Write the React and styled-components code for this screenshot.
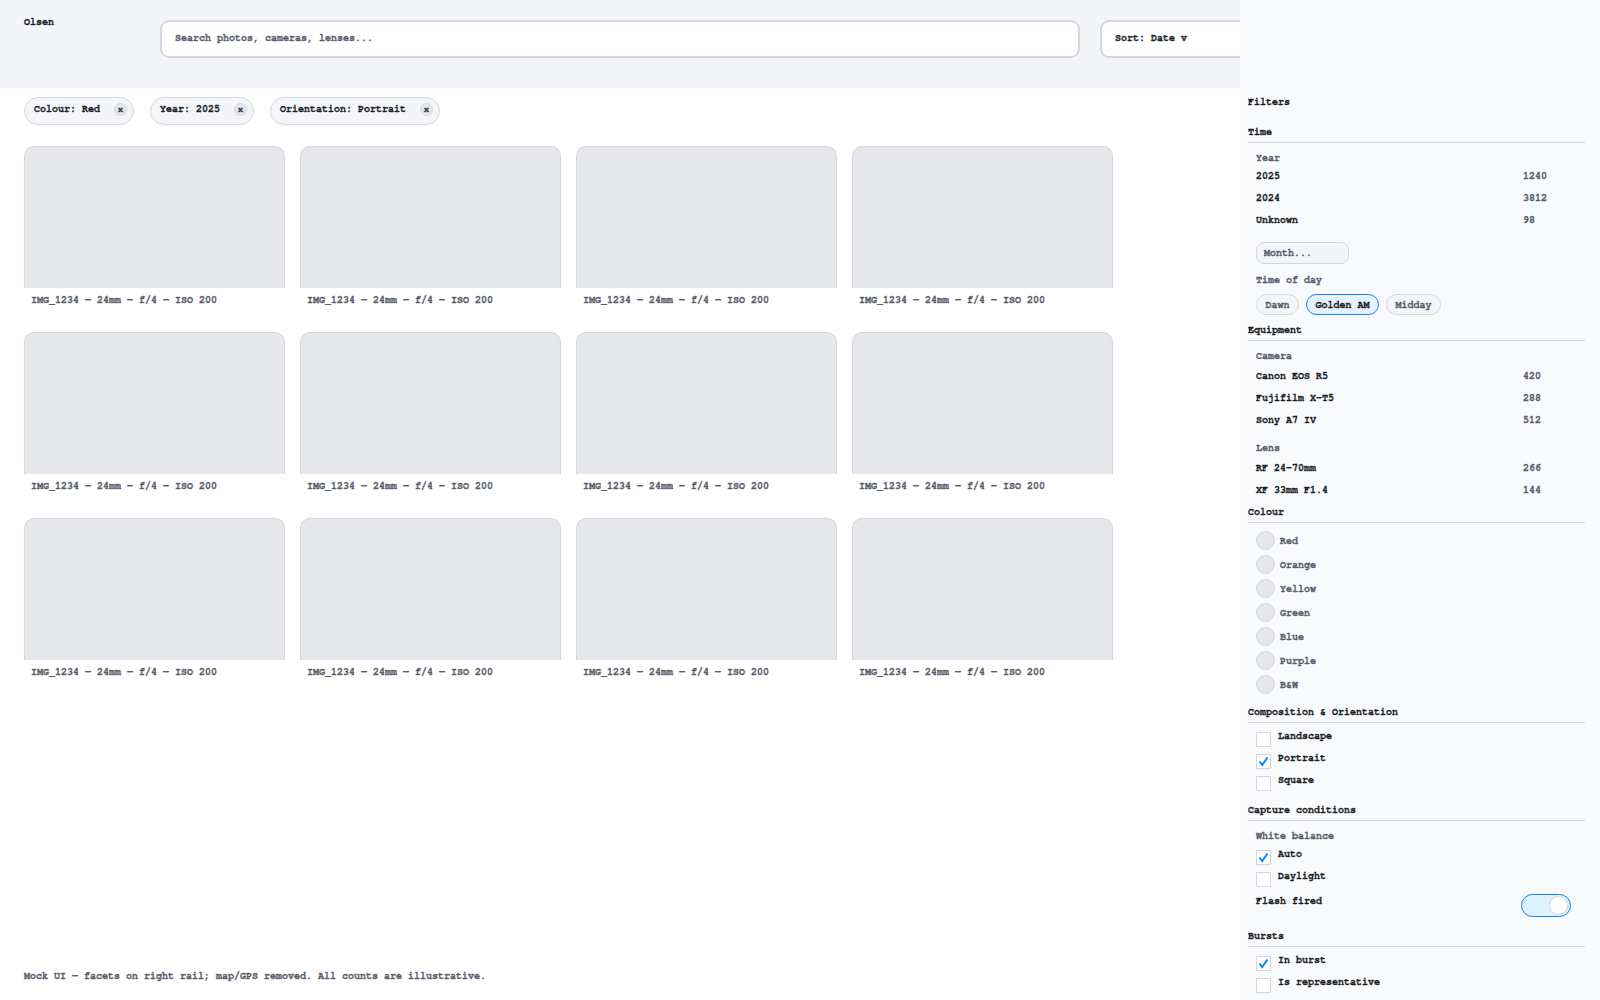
import React from 'react';
import styled, { createGlobalStyle } from 'styled-components';

const Global = createGlobalStyle`
  html, body { margin: 0; padding: 0; }
  body {
    font-family: FreeMono, "Liberation Mono", monospace;
    font-size: 10px;
    color: #1b1e26;
    background: #ffffff;
    -webkit-text-stroke: 0.3px currentColor;
  }
  * { box-sizing: border-box; }
`;

const C = {
  ink: '#1b1e26',
  muted: '#585d6b',
  line: '#d4d6dd',
  headerBg: '#f4f5f9',
  railBg: '#f9fafc',
  thumb: '#e5e7eb',
  blue: '#0a84ff',
};

/* ---------- main column ---------- */
const Main = styled.main`
  min-height: 100vh;
  display: flex;
  flex-direction: column;
`;

const Header = styled.header`
  height: 88px;
  background: ${C.headerBg};
  display: grid;
  grid-template-columns: 116px 1fr 476px;
  column-gap: 20px;
  align-items: start;
  padding: 20px 24px 0;
`;

const Logo = styled.div`
  font-weight: 700;
  line-height: 14px;
  margin-top: -5px;
`;

const Field = styled.div`
  height: 38px;
  border: 2px solid ${C.line};
  border-radius: 9px;
  background: #fff;
  display: flex;
  align-items: center;
  padding: 0 13px 2px;
  font-weight: 700;
  color: ${(p) => (p.$placeholder ? C.muted : C.ink)};
  white-space: nowrap;
`;

const ChipBar = styled.div`
  display: flex;
  gap: 16px;
  padding: 9px 24px 0;
`;

const Chip = styled.div`
  height: 28px;
  display: inline-flex;
  align-items: center;
  gap: 14px;
  padding: 0 6px 4px 9px;
  border: 1px solid ${C.line};
  border-radius: 14px;
  background: ${C.headerBg};
  font-weight: 700;
  white-space: nowrap;
`;

const ChipX = styled.span`
  width: 13px;
  height: 13px;
  border-radius: 50%;
  background: ${C.thumb};
  border: 1px solid ${C.line};
  display: grid;
  place-items: center;
  font-size: 9px;
  line-height: 1;
  font-weight: 700;
  color: #3a3e49;
`;

const Grid = styled.section`
  display: grid;
  grid-template-columns: repeat(4, 261px);
  column-gap: 15px;
  row-gap: 16px;
  margin-top: 21px;
  padding: 0 24px;
`;

const Card = styled.article`
  display: flex;
  flex-direction: column;
`;

const Thumb = styled.div`
  height: 142px;
  background: ${C.thumb};
  border: 1px solid ${C.line};
  border-bottom: none;
  border-radius: 10px 10px 0 0;
`;

const Caption = styled.div`
  padding: 5px 7px 9px;
  line-height: 14px;
  font-weight: 700;
  color: ${C.muted};
  white-space: nowrap;
`;

const Footer = styled.footer`
  margin-top: auto;
  padding: 0 24px 17px;
  line-height: 14px;
  font-weight: 700;
  color: ${C.muted};
`;

/* ---------- right rail ---------- */
const Rail = styled.aside`
  position: fixed;
  top: 0;
  right: 0;
  width: 360px;
  height: 100vh;
  overflow: hidden;
  background: ${C.railBg};
  padding: 95px 15px 0 8px;
`;

const RailTitle = styled.div`
  font-weight: 700;
  line-height: 14px;
  margin-bottom: 16px;
`;

const SectionHead = styled.div`
  font-weight: 700;
  line-height: 14px;
  padding-bottom: 3px;
  border-bottom: 1px solid #d5d6df;
`;

const SectionBody = styled.div`
  display: flex;
  flex-direction: column;
  padding: ${(p) => p.$top}px 14px ${(p) => p.$bottom}px 8px;
`;

const GroupLabel = styled.div`
  line-height: 14px;
  font-weight: 700;
  color: ${C.muted};
  margin-top: ${(p) => p.$mt || 0}px;
`;

const FacetList = styled.div`
  display: flex;
  flex-direction: column;
  margin-top: ${(p) => p.$mt || 0}px;
`;

const FacetRow = styled.div`
  height: 22px;
  display: grid;
  grid-template-columns: 1fr 48px;
  align-items: center;
  font-weight: 700;
`;

const Count = styled.span`
  color: ${C.muted};
`;

const Select = styled.div`
  width: 93px;
  height: 22px;
  margin-top: 11px;
  border: 1px solid ${C.line};
  border-radius: 8px;
  background: ${C.headerBg};
  display: flex;
  align-items: center;
  padding: 0 7px;
  font-weight: 700;
  color: ${C.muted};
`;

const PillRow = styled.div`
  display: flex;
  gap: 7px;
  margin-top: 7px;
`;

const Pill = styled.div`
  height: 21px;
  display: flex;
  align-items: center;
  padding: 0 8.5px;
  border: 1px solid ${(p) => (p.$on ? C.blue : C.line)};
  border-radius: 11px;
  background: ${(p) => (p.$on ? '#e6f3ff' : C.headerBg)};
  color: ${(p) => (p.$on ? C.ink : C.muted)};
  font-weight: 700;
`;

const SwatchList = styled.div`
  display: flex;
  flex-direction: column;
  gap: 5px;
`;

const SwatchRow = styled.div`
  height: 19px;
  display: flex;
  align-items: center;
  gap: 5px;
  font-weight: 700;
  color: ${C.muted};
`;

const Swatch = styled.span`
  width: 19px;
  height: 19px;
  border-radius: 50%;
  background: ${C.thumb};
  border: 1px solid ${C.line};
`;

const CheckRow = styled.div`
  height: 22px;
  display: flex;
  align-items: flex-start;
  gap: 7px;
  font-weight: 700;
  line-height: 14px;
  margin-top: ${(p) => p.$mt || 0}px;
`;

const Box = styled.span`
  width: 15px;
  height: 15px;
  margin-top: 3px;
  background: #fff;
  border: 1px solid ${C.line};
  display: grid;
  place-items: center;
`;

const ToggleRow = styled.div`
  display: flex;
  justify-content: space-between;
  align-items: flex-start;
  margin-top: 3px;
  font-weight: 700;
  line-height: 14px;
`;

const Toggle = styled.span`
  width: 50px;
  height: 23px;
  border: 1px solid ${C.blue};
  border-radius: 12px;
  background: #dff2ff;
  display: flex;
  align-items: center;
  justify-content: flex-end;
  padding-right: 2px;
`;

const Knob = styled.span`
  width: 19px;
  height: 19px;
  border-radius: 50%;
  background: #fff;
  border: 1px solid ${C.line};
`;

const Check = () => (
  <svg width="11" height="11" viewBox="0 0 11 11">
    <path d="M1.5 5.5 L4.2 9 L9.5 1.5" fill="none" stroke={C.blue} strokeWidth="2" />
  </svg>
);

const CheckItem = ({ on, children, mt }) => (
  <CheckRow $mt={mt}>
    <Box>{on && <Check />}</Box>
    <span>{children}</span>
  </CheckRow>
);

const Facets = ({ items, mt }) => (
  <FacetList $mt={mt}>
    {items.map(([l, n]) => (
      <FacetRow key={l}>
        <span>{l}</span>
        <Count>{n}</Count>
      </FacetRow>
    ))}
  </FacetList>
);

const chips = ['Colour: Red', 'Year: 2025', 'Orientation: Portrait'];
const years = [['2025', 1240], ['2024', 3812], ['Unknown', 98]];
const cameras = [['Canon EOS R5', 420], ['Fujifilm X-T5', 288], ['Sony A7 IV', 512]];
const lenses = [['RF 24-70mm', 266], ['XF 33mm F1.4', 144]];
const colours = ['Red', 'Orange', 'Yellow', 'Green', 'Blue', 'Purple', 'B&W'];

export default function App() {
  return (
    <>
      <Global />
      <Main>
        <Header>
          <Logo>Olsen</Logo>
          <Field $placeholder>Search photos, cameras, lenses...</Field>
          <Field>Sort: Date v</Field>
        </Header>
        <ChipBar>
          {chips.map((c) => (
            <Chip key={c}>
              {c}
              <ChipX>x</ChipX>
            </Chip>
          ))}
        </ChipBar>
        <Grid>
          {Array.from({ length: 12 }).map((_, i) => (
            <Card key={i}>
              <Thumb />
              <Caption>IMG_1234 — 24mm — f/4 — ISO 200</Caption>
            </Card>
          ))}
        </Grid>
        <Footer>Mock UI — facets on right rail; map/GPS removed. All counts are illustrative.</Footer>
      </Main>

      <Rail>
        <RailTitle>Filters</RailTitle>

        <SectionHead>Time</SectionHead>
        <SectionBody $top={8} $bottom={8}>
          <GroupLabel>Year</GroupLabel>
          <Facets items={years} />
          <Select>Month...</Select>
          <GroupLabel $mt={9}>Time of day</GroupLabel>
          <PillRow>
            <Pill>Dawn</Pill>
            <Pill $on>Golden AM</Pill>
            <Pill>Midday</Pill>
          </PillRow>
        </SectionBody>

        <SectionHead>Equipment</SectionHead>
        <SectionBody $top={8} $bottom={4}>
          <GroupLabel>Camera</GroupLabel>
          <Facets items={cameras} mt={2} />
          <GroupLabel $mt={10}>Lens</GroupLabel>
          <Facets items={lenses} mt={2} />
        </SectionBody>

        <SectionHead>Colour</SectionHead>
        <SectionBody $top={8} $bottom={11}>
          <SwatchList>
            {colours.map((c) => (
              <SwatchRow key={c}>
                <Swatch />
                {c}
              </SwatchRow>
            ))}
          </SwatchList>
        </SectionBody>

        <SectionHead>Composition &amp; Orientation</SectionHead>
        <SectionBody $top={6} $bottom={8}>
          <CheckItem>Landscape</CheckItem>
          <CheckItem on>Portrait</CheckItem>
          <CheckItem>Square</CheckItem>
        </SectionBody>

        <SectionHead>Capture conditions</SectionHead>
        <SectionBody $top={8} $bottom={12}>
          <GroupLabel>White balance</GroupLabel>
          <CheckItem on mt={4}>Auto</CheckItem>
          <CheckItem>Daylight</CheckItem>
          <ToggleRow>
            <span>Flash fired</span>
            <Toggle>
              <Knob />
            </Toggle>
          </ToggleRow>
        </SectionBody>

        <SectionHead>Bursts</SectionHead>
        <SectionBody $top={6} $bottom={8}>
          <CheckItem on>In burst</CheckItem>
          <CheckItem>Is representative</CheckItem>
        </SectionBody>
      </Rail>
    </>
  );
}
